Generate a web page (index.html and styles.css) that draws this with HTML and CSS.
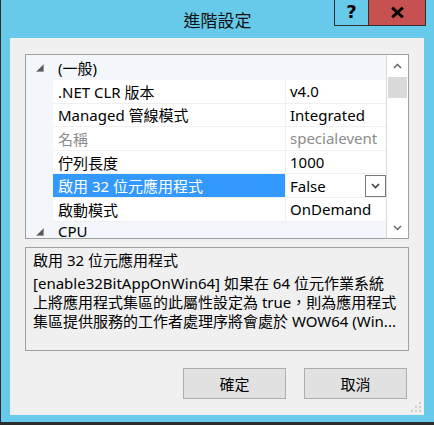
FILE: index.html
```html
<!DOCTYPE html>
<html lang="zh-Hant">
<head>
<meta charset="utf-8">
<title>進階設定</title>
<link rel="stylesheet" href="styles.css">
</head>
<body>
<div class="window">
  <div class="titlebar">
    <span class="title">進階設定</span>
    <div class="caption">
      <div class="cap-btn help">?</div>
      <div class="cap-btn close">
        <svg width="13" height="11" viewBox="0 0 13 11"><path d="M1.2 0.6 L11.8 10.4 M11.8 0.6 L1.2 10.4" stroke="#000" stroke-width="2.8" fill="none"/></svg>
      </div>
    </div>
  </div>
  <div class="client">
    <div class="grid">
      <div class="rows">
        <div class="cat">
          <span class="gut"><svg class="tri" width="8" height="8" viewBox="0 0 8 8"><polygon points="7.5,0.5 7.5,7.5 0.5,7.5" fill="#5a5a5a" stroke="#8a8a8a" stroke-width="0.6"/></svg></span>
          <span class="cat-label">(一般)</span>
        </div>
        <div class="row"><span class="gut"></span><span class="name">.NET CLR 版本</span><span class="val">v4.0</span></div>
        <div class="row"><span class="gut"></span><span class="name">Managed 管線模式</span><span class="val">Integrated</span></div>
        <div class="row dim"><span class="gut"></span><span class="name">名稱</span><span class="val">specialevent</span></div>
        <div class="row"><span class="gut"></span><span class="name">佇列長度</span><span class="val">1000</span></div>
        <div class="row"><span class="gut"></span><span class="name sel">啟用 32 位元應用程式</span><span class="val">False<span class="ddbtn"><svg width="9" height="6" viewBox="0 0 9 6"><polyline points="1,1 4.5,4.5 8,1" fill="none" stroke="#404040" stroke-width="1.6"/></svg></span></span></div>
        <div class="row"><span class="gut"></span><span class="name">啟動模式</span><span class="val">OnDemand</span></div>
        <div class="cat last">
          <span class="gut"><svg class="tri" width="8" height="8" viewBox="0 0 8 8"><polygon points="7.5,0.5 7.5,7.5 0.5,7.5" fill="#5a5a5a" stroke="#8a8a8a" stroke-width="0.6"/></svg></span>
          <span class="cat-label">CPU</span>
        </div>
      </div>
      <div class="scrollbar">
        <div class="sb-btn up"><svg width="9" height="6" viewBox="0 0 9 6"><polyline points="1,5 4.5,1.5 8,5" fill="none" stroke="#606060" stroke-width="1.4"/></svg></div>
        <div class="thumb"></div>
        <div class="track"></div>
        <div class="sb-btn down"><svg width="9" height="6" viewBox="0 0 9 6"><polyline points="1,1 4.5,4.5 8,1" fill="none" stroke="#606060" stroke-width="1.4"/></svg></div>
      </div>
    </div>
    <div class="desc">
      <div class="desc-title">啟用 32 位元應用程式</div>
      <div class="desc-body">[enable32BitAppOnWin64] 如果在 64 位元作業系統<br>上將應用程式集區的此屬性設定為 true，則為應用程式<br>集區提供服務的工作者處理序將會處於 WOW64 (Win...</div>
    </div>
    <div class="buttons">
      <div class="btn">確定</div>
      <div class="btn">取消</div>
    </div>
    <svg class="grip" width="12" height="12" viewBox="0 0 12 12">
      <rect x="9" y="1" width="2" height="2" fill="#cfcfcf"/>
      <rect x="5" y="5" width="2" height="2" fill="#cfcfcf"/>
      <rect x="9" y="5" width="2" height="2" fill="#cfcfcf"/>
      <rect x="1" y="9" width="2" height="2" fill="#cfcfcf"/>
      <rect x="5" y="9" width="2" height="2" fill="#cfcfcf"/>
      <rect x="9" y="9" width="2" height="2" fill="#cfcfcf"/>
    </svg>
  </div>
</div>
</body>
</html>
```
FILE: styles.css
```css
* { box-sizing: border-box; }
html, body { margin: 0; padding: 0; }
body {
  width: 434px;
  height: 425px;
  overflow: hidden;
  background: #2b2b2b;
  font-family: "Noto Sans", "Noto Sans CJK TC", sans-serif;
  font-size: 15px;
  color: #000;
}
.window {
  margin-left: 1px;
  width: 433px;
  height: 422px;
  background: #68caea;
  position: relative;
  display: flex;
  flex-direction: column;
}
.titlebar {
  height: 38px;
  flex: none;
  display: flex;
  align-items: center;
  justify-content: center;
}
.title {
  font-family: "Noto Sans CJK TC", sans-serif;
  font-size: 17px;
  line-height: 20px;
  color: #111;
  padding-top: 2px;
}
.caption {
  position: absolute;
  top: 0;
  right: 8px;
  display: flex;
}
.cap-btn {
  height: 26px;
  border: 1px solid #2f2f2f;
  border-top: none;
  display: flex;
  align-items: center;
  justify-content: center;
}
.help {
  width: 34px;
  border-right: none;
  font-family: "DejaVu Sans", sans-serif;
  font-weight: bold;
  font-size: 18px;
  line-height: 1;
  padding-bottom: 2px;
}
.close {
  width: 58px;
  background: #c75050;
}
.client {
  margin-left: 9px;
  width: 414px;
  height: 377px;
  background: #f0f0f0;
  padding: 16px 15px 0 15px;
  position: relative;
}
.grid {
  height: 185px;
  border: 1px solid #a0a0a0;
  background: #fff;
  display: flex;
}
.rows {
  flex: 1;
  display: flex;
  flex-direction: column;
}
.cat {
  flex: none;
  height: 25px;
  background: #f3f6fb;
  display: flex;
  align-items: center;
}
.cat.last {
  height: 16.4px;
  align-items: flex-end;
}
.cat.last .cat-label { line-height: 14px; }
.cat.last .gut { padding-top: 4px; }
.row {
  flex: none;
  height: 23.6px;
  display: flex;
}
.gut {
  width: 27px;
  flex: none;
  align-self: stretch;
  display: flex;
  align-items: center;
  padding-left: 10px;
  background: #f3f6fb;
}
.tri { display: block; }
.cat-label, .name { padding-left: 5px; }
.name {
  width: 233px;
  flex: none;
  border-bottom: 1px solid #f0f0f0;
  border-right: 1px solid #f0f0f0;
  display: flex;
  align-items: center;
  white-space: nowrap;
}
.name.sel {
  background: #3399ff;
  color: #fff;
}
.val {
  flex: 1;
  border-bottom: 1px solid #f0f0f0;
  display: flex;
  align-items: center;
  padding-left: 4px;
  white-space: nowrap;
}
.dim .name, .dim .val { color: #8c8c8c; }
.ddbtn {
  margin-left: auto;
  width: 21px;
  height: 22px;
  border: 1px solid #7a7a7a;
  background: #fff;
  display: flex;
  align-items: center;
  justify-content: center;
}
.scrollbar {
  width: 22px;
  flex: none;
  border-left: 1px solid #dadada;
  display: flex;
  flex-direction: column;
  background: #fff;
}
.sb-btn {
  flex: none;
  display: flex;
  align-items: center;
  justify-content: center;
}
.sb-btn.up { height: 22px; }
.sb-btn.down { height: 20px; }
.thumb {
  flex: none;
  height: 21px;
  margin: 0 1px 0 1px;
  background: #dadada;
}
.track { flex: 1; }
.desc {
  margin-top: 8px;
  height: 104px;
  border: 1px solid #a0a0a0;
  padding: 3px 7px;
  line-height: 19px;
}
.desc-body {
  margin-top: 4px;
  white-space: nowrap;
}
.buttons {
  margin-top: 17px;
  padding-right: 2px;
  display: flex;
  justify-content: flex-end;
  gap: 18px;
}
.btn {
  width: 103px;
  height: 31px;
  background: #e1e1e1;
  border: 1px solid #adadad;
  display: flex;
  align-items: center;
  justify-content: center;
}
.grip {
  position: absolute;
  right: 2px;
  bottom: 2px;
}
```
